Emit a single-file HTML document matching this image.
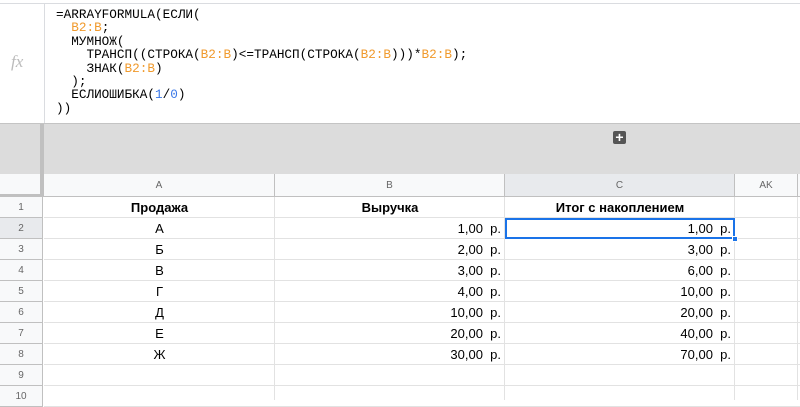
<!DOCTYPE html>
<html><head><meta charset="utf-8"><style>
*{margin:0;padding:0;box-sizing:border-box}
body{width:800px;height:400px;overflow:hidden;background:#fff;font-family:"Liberation Sans","DejaVu Sans",sans-serif;position:relative}
.abs{position:absolute}
.f{left:56px;top:8px;font-family:"Liberation Mono","DejaVu Sans Mono",monospace;font-size:12.7px;line-height:13.4px;color:#000;white-space:pre}
.o{color:#f09a2d}.b{color:#3b78e7}
.cell{position:absolute;height:21px;line-height:21px;font-size:13px;color:#000}
.rh{position:absolute;left:0;width:43px;height:21px;line-height:21px;text-align:center;font-size:10px;color:#666;background:#f8f9fa;border-right:1px solid #c0c0c0;border-bottom:1px solid #c0c0c0}
.ch{position:absolute;top:174px;height:23px;line-height:23px;text-align:center;font-size:10px;color:#666;background:#f8f9fa;border-right:1px solid #c0c0c0;border-bottom:1px solid #c0c0c0}
</style></head><body>
<div class="abs" style="left:0;top:3px;width:800px;height:1px;background:#dadce0"></div>
<div class="abs" style="left:44px;top:4px;width:1px;height:119px;background:#dadce0"></div>
<div class="abs" style="left:11px;top:52px;font-family:'Liberation Serif',serif;font-style:italic;font-size:17px;color:#bbb">fx</div>
<div class="abs f">=ARRAYFORMULA(ЕСЛИ(
  <span class="o">B2:B</span>;
  МУМНОЖ(
    ТРАНСП((СТРОКА(<span class="o">B2:B</span>)&lt;=ТРАНСП(СТРОКА(<span class="o">B2:B</span>)))*<span class="o">B2:B</span>);
    ЗНАК(<span class="o">B2:B</span>)
  );
  ЕСЛИОШИБКА(<span class="b">1</span>/<span class="b">0</span>)
))</div>
<div class="abs" style="left:0;top:123px;width:800px;height:51px;background:#dcdcdc;border-top:1px solid #c4c4c4"></div>
<div class="abs" style="left:0;top:174px;width:44px;height:23px;background:#f8f9fa"></div>
<div class="abs" style="left:40px;top:124px;width:4px;height:73px;background:#c0c0c0"></div>
<div class="abs" style="left:0;top:194px;width:44px;height:3px;background:#c0c0c0"></div>
<div class="abs" style="left:613px;top:131px;width:13px;height:13px;background:#555;border-radius:2px;color:#fff;font-size:14px;line-height:13px;text-align:center;font-weight:bold">+</div>
<div class="ch" style="left:44px;width:231px">A</div>
<div class="ch" style="left:275px;width:230px">B</div>
<div class="ch" style="left:505px;width:230px;background:#e8eaed">C</div>
<div class="ch" style="left:735px;width:63px">AK</div>
<div class="ch" style="left:798px;width:10px"></div>
<div id="g"></div>
<script>
var rows=[["Продажа","Выручка","Итог с накоплением"],["А","1,00","1,00"],["Б","2,00","3,00"],["В","3,00","6,00"],["Г","4,00","10,00"],["Д","10,00","20,00"],["Е","20,00","40,00"],["Ж","30,00","70,00"],["","",""],["","",""]];
var h="";
for(var i=0;i<10;i++){var y=197+i*21;
h+='<div class="rh" style="top:'+y+'px;'+(i==1?'background:#e8eaed':'')+'">'+(i+1)+'</div>';
h+='<div class="abs" style="left:44px;top:'+(y+20)+'px;width:756px;height:1px;background:#e2e2e2"></div>';
var r=rows[i];var t='top:'+y+'px;';
if(i==0){h+='<div class="cell" style="'+t+'left:44px;width:231px;text-align:center;font-weight:bold">'+r[0]+'</div><div class="cell" style="'+t+'left:275px;width:230px;text-align:center;font-weight:bold">'+r[1]+'</div><div class="cell" style="'+t+'left:505px;width:230px;text-align:center;font-weight:bold">'+r[2]+'</div>';}
else if(r[0]){h+='<div class="cell" style="'+t+'left:44px;width:231px;text-align:center">'+r[0]+'</div><div class="cell" style="'+t+'left:275px;width:226px;text-align:right">'+r[1]+'&nbsp; р.</div><div class="cell" style="'+t+'left:505px;width:226px;text-align:right">'+r[2]+'&nbsp; р.</div>';}
}
document.getElementById('g').innerHTML=h;
</script>
<div class="abs" style="left:274px;top:197px;width:1px;height:203px;background:#e2e2e2"></div>
<div class="abs" style="left:504px;top:197px;width:1px;height:203px;background:#e2e2e2"></div>
<div class="abs" style="left:734px;top:197px;width:1px;height:203px;background:#e2e2e2"></div>
<div class="abs" style="left:797px;top:197px;width:1px;height:203px;background:#e2e2e2"></div>
<div class="abs" style="left:505px;top:218px;width:230px;height:21px;border:2px solid #1a73e8"></div>
<div class="abs" style="left:732px;top:236px;width:6px;height:6px;background:#1a73e8;border:1px solid #fff"></div>
</body></html>
